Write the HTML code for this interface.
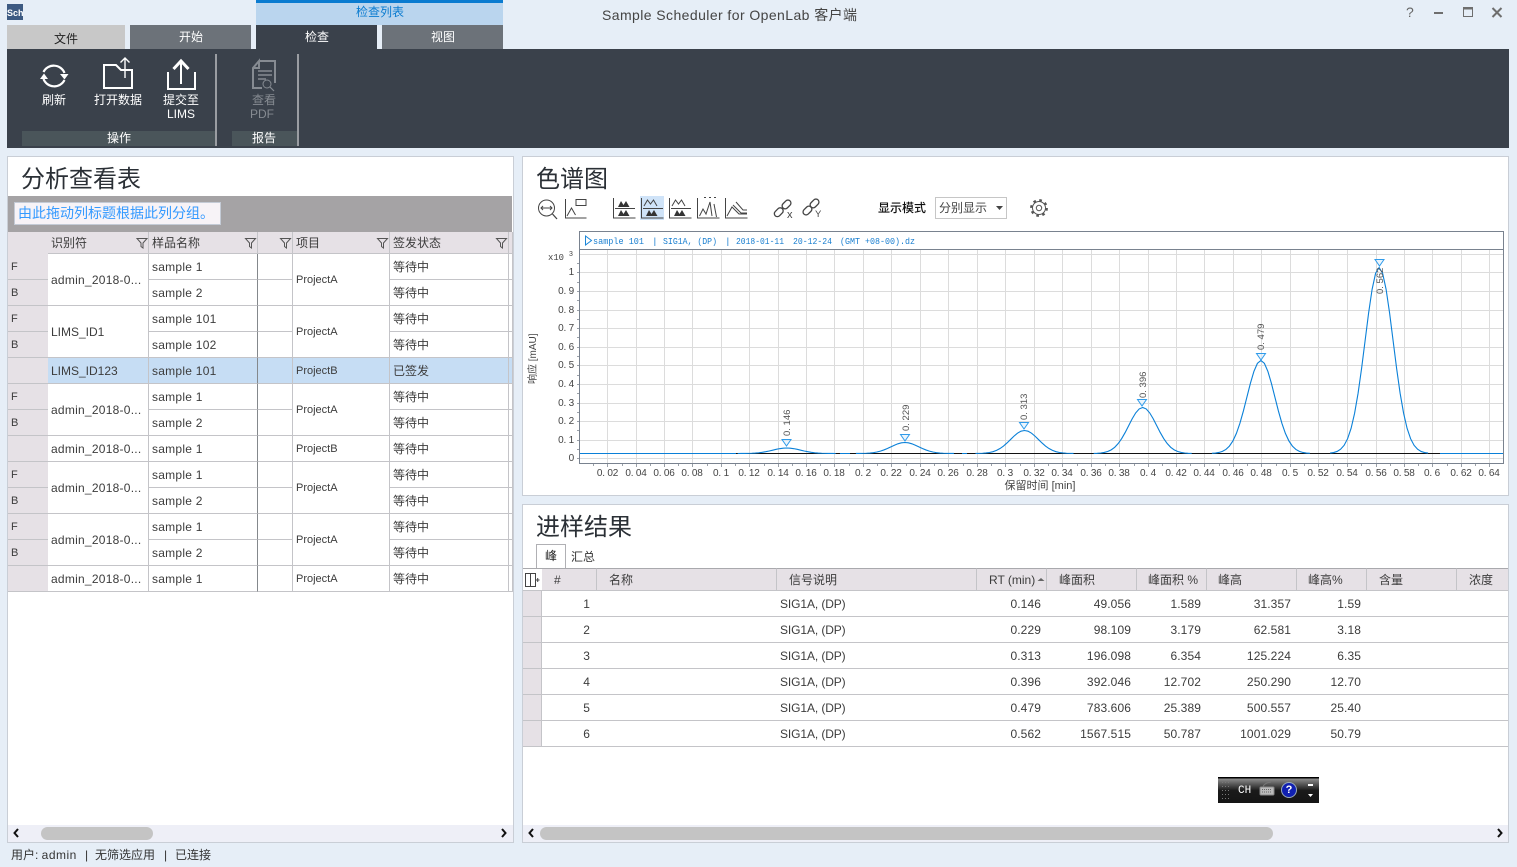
<!DOCTYPE html>
<html lang="zh"><head><meta charset="utf-8"><title>Sample Scheduler for OpenLab</title>
<style>
html,body{margin:0;padding:0}
body{width:1517px;height:867px;position:relative;overflow:hidden;background:#e6eef7;font-family:"Liberation Sans","Noto Sans CJK SC",sans-serif;color:#333;font-size:12px}
.a{position:absolute}
.t{position:absolute;white-space:nowrap;line-height:16px;height:16px}
.c{transform:translateX(-50%)}
.panel{position:absolute;background:#fff;border:1px solid #c9ced6;box-sizing:border-box}
.title{position:absolute;font-size:24px;line-height:30px;white-space:nowrap;color:#2b3036}
table{position:absolute;border-collapse:separate;border-spacing:0;table-layout:fixed}
td,th{box-sizing:border-box;padding:0 3px;font-weight:normal;text-align:left;white-space:nowrap;overflow:hidden;border-right:1px solid #c4c4c8;border-bottom:1px solid #c4c4c8;height:26px;color:#3c3c3c;letter-spacing:.25px}
th{height:22px;background:#e6e1e6;border-bottom:1px solid #c4c4c8;letter-spacing:0}
.h{background:#e6e1e6;font-size:11px;padding-left:3px;border-right:none}
.d{border-right:1px solid #84888c}
.p{font-size:11px;letter-spacing:0}
.z{letter-spacing:0}
.s td{background:#c6ddf4}
.s td.h{background:#e6e1e6}
#R td{text-align:right;padding:0 6px;border-right:none;letter-spacing:.1px}
#R td.l{text-align:left;padding:0 3px;letter-spacing:-.1px}
#R td.h{background:#e6e1e6;border-right:1px solid #c4c4c8}
#R th{padding:0 0 0 12px;border-top:1px solid #a9a9ad;height:23px}
.sb{position:absolute;background:#eeeff7;height:17px}
.th{position:absolute;background:#c4c4c4;border-radius:7px;height:13px}
svg{position:absolute;left:0;top:0}
</style></head>
<body>
<!-- title bar -->
<div class="a" style="left:7px;top:4px;width:16px;height:16px;background:#3d5a82;color:#fff;font:bold 9px/19px 'Liberation Sans',sans-serif;text-align:center;overflow:hidden">Sch</div>
<div class="a" style="left:256px;top:0;width:247px;height:25px;background:#bad5ee;border-top:3px solid #0a7bd0;box-sizing:border-box"></div>
<div class="t c" style="left:380px;top:4px;color:#0a7bd0">检查列表</div>
<div class="t" style="left:602px;top:7px;font-size:14px;letter-spacing:.42px;color:#444">Sample Scheduler for OpenLab 客户端</div>
<div class="a" style="left:7px;top:25px;width:118px;height:24px;background:#c8c8c8"></div>
<div class="a" style="left:130px;top:25px;width:121px;height:24px;background:#6c7279"></div>
<div class="a" style="left:256px;top:25px;width:121px;height:24px;background:#3a414b"></div>
<div class="a" style="left:382px;top:25px;width:121px;height:24px;background:#6c7279"></div>
<div class="t c" style="left:66px;top:31px;color:#222">文件</div>
<div class="t c" style="left:191px;top:29px;color:#fff">开始</div>
<div class="t c" style="left:317px;top:29px;color:#fff">检查</div>
<div class="t c" style="left:443px;top:29px;color:#fff">视图</div>
<!-- ribbon -->
<div class="a" style="left:7px;top:49px;width:1502px;height:99px;background:#3a414b"></div>
<div class="a" style="left:22px;top:131px;width:193px;height:15px;background:#4a555a"></div>
<div class="a" style="left:232px;top:131px;width:65px;height:15px;background:#4a555a"></div>
<div class="a" style="left:215px;top:54px;width:2px;height:92px;background:#9a9da2"></div>
<div class="a" style="left:297px;top:54px;width:2px;height:92px;background:#9a9da2"></div>
<div class="t c" style="left:54px;top:92px;color:#fff">刷新</div>
<div class="t c" style="left:118px;top:92px;color:#fff">打开数据</div>
<div class="t c" style="left:181px;top:92px;color:#fff">提交至</div>
<div class="t c" style="left:181px;top:106px;color:#fff">LIMS</div>
<div class="t c" style="left:264px;top:92px;color:#868b92">查看</div>
<div class="t c" style="left:262px;top:106px;color:#868b92">PDF</div>
<div class="t c" style="left:119px;top:130px;color:#fff">操作</div>
<div class="t c" style="left:264px;top:130px;color:#fff">报告</div>

<!-- left panel -->
<div class="panel" style="left:7px;top:156px;width:507px;height:687px"></div>
<div class="title" style="left:21px;top:165px">分析查看表</div>
<div class="a" style="left:8px;top:196px;width:504px;height:36px;background:#a5a3a5"></div>
<div class="a" style="left:14px;top:202px;width:207px;height:23px;background:#f7f3f7;border:1px solid #c4cbd6;box-sizing:border-box;color:#3399ff;font-size:14px;line-height:21px;padding-left:3px;white-space:nowrap">由此拖动列标题根据此列分组。</div>
<table style="left:8px;top:232px;width:505px">
<colgroup><col style="width:40px"><col style="width:101px"><col style="width:109px"><col style="width:35px"><col style="width:97px"><col style="width:119px"><col style="width:4px"></colgroup>
<tr><th style="border-right:none;border-bottom:none"></th><th>识别符</th><th>样品名称</th><th></th><th>项目</th><th>签发状态</th><th style="padding:0"></th></tr>
<tr><td class="h">F</td><td rowspan="2">admin_2018-0...</td><td class="d">sample 1</td><td></td><td rowspan="2" class="p">ProjectA</td><td class="z">等待中</td><td style="padding:0"></td></tr>
<tr><td class="h">B</td><td class="d">sample 2</td><td></td><td class="z">等待中</td><td style="padding:0"></td></tr>
<tr><td class="h">F</td><td rowspan="2" class="z">LIMS_ID1</td><td class="d">sample 101</td><td></td><td rowspan="2" class="p">ProjectA</td><td class="z">等待中</td><td style="padding:0"></td></tr>
<tr><td class="h">B</td><td class="d">sample 102</td><td></td><td class="z">等待中</td><td style="padding:0"></td></tr>
<tr class="s"><td class="h"></td><td class="z">LIMS_ID123</td><td class="d">sample 101</td><td></td><td class="p">ProjectB</td><td class="z">已签发</td><td style="padding:0"></td></tr>
<tr><td class="h">F</td><td rowspan="2">admin_2018-0...</td><td class="d">sample 1</td><td></td><td rowspan="2" class="p">ProjectA</td><td class="z">等待中</td><td style="padding:0"></td></tr>
<tr><td class="h">B</td><td class="d">sample 2</td><td></td><td class="z">等待中</td><td style="padding:0"></td></tr>
<tr><td class="h"></td><td>admin_2018-0...</td><td class="d">sample 1</td><td></td><td class="p">ProjectB</td><td class="z">等待中</td><td style="padding:0"></td></tr>
<tr><td class="h">F</td><td rowspan="2">admin_2018-0...</td><td class="d">sample 1</td><td></td><td rowspan="2" class="p">ProjectA</td><td class="z">等待中</td><td style="padding:0"></td></tr>
<tr><td class="h">B</td><td class="d">sample 2</td><td></td><td class="z">等待中</td><td style="padding:0"></td></tr>
<tr><td class="h">F</td><td rowspan="2">admin_2018-0...</td><td class="d">sample 1</td><td></td><td rowspan="2" class="p">ProjectA</td><td class="z">等待中</td><td style="padding:0"></td></tr>
<tr><td class="h">B</td><td class="d">sample 2</td><td></td><td class="z">等待中</td><td style="padding:0"></td></tr>
<tr><td class="h"></td><td>admin_2018-0...</td><td class="d">sample 1</td><td></td><td class="p">ProjectA</td><td class="z">等待中</td><td style="padding:0"></td></tr>
</table>
<div class="sb" style="left:8px;top:825px;width:505px"></div>
<div class="th" style="left:41px;top:827px;width:112px"></div>

<!-- chart panel -->
<div class="panel" style="left:522px;top:156px;width:987px;height:340px"></div>
<div class="title" style="left:536px;top:165px">色谱图</div>
<div class="a" style="left:640px;top:196px;width:24px;height:24px;background:#cfe3f8"></div>
<div class="t" style="left:878px;top:200px;color:#111;font-weight:500">显示模式</div>
<div class="a" style="left:935px;top:197px;width:72px;height:22px;box-sizing:border-box;border:1px solid #c6c6c6;padding-left:3px;line-height:20px;white-space:nowrap;color:#444">分别显示</div>

<!-- results panel -->
<div class="panel" style="left:522px;top:504px;width:987px;height:339px"></div>
<div class="title" style="left:536px;top:513px">进样结果</div>
<div class="a" style="left:536px;top:544px;width:30px;height:25px;background:#fff;border:1px solid #b0b0b4;border-bottom:none;box-sizing:border-box;text-align:center;line-height:23px;color:#222">峰</div>
<div class="t" style="left:571px;top:549px;color:#333">汇总</div>
<table id="R" style="left:523px;top:568px;width:985px">
<colgroup><col style="width:19px"><col style="width:55px"><col style="width:180px"><col style="width:200px"><col style="width:70px"><col style="width:90px"><col style="width:70px"><col style="width:90px"><col style="width:70px"><col style="width:90px"><col style="width:51px"></colgroup>
<tr><th style="padding:0;border-right:none;background:#fff"></th><th>#</th><th>名称</th><th>信号说明</th><th>RT (min)</th><th>峰面积</th><th style="padding-left:11px">峰面积 %</th><th style="padding-left:11px">峰高</th><th style="padding-left:11px">峰高%</th><th>含量</th><th style="border-right:none">浓度</th></tr>
<tr><td class="h"></td><td style="padding-right:7px">1</td><td></td><td class="l">SIG1A, (DP)</td><td>0.146</td><td>49.056</td><td>1.589</td><td>31.357</td><td>1.59</td><td></td><td></td></tr>
<tr><td class="h"></td><td style="padding-right:7px">2</td><td></td><td class="l">SIG1A, (DP)</td><td>0.229</td><td>98.109</td><td>3.179</td><td>62.581</td><td>3.18</td><td></td><td></td></tr>
<tr><td class="h"></td><td style="padding-right:7px">3</td><td></td><td class="l">SIG1A, (DP)</td><td>0.313</td><td>196.098</td><td>6.354</td><td>125.224</td><td>6.35</td><td></td><td></td></tr>
<tr><td class="h"></td><td style="padding-right:7px">4</td><td></td><td class="l">SIG1A, (DP)</td><td>0.396</td><td>392.046</td><td>12.702</td><td>250.290</td><td>12.70</td><td></td><td></td></tr>
<tr><td class="h"></td><td style="padding-right:7px">5</td><td></td><td class="l">SIG1A, (DP)</td><td>0.479</td><td>783.606</td><td>25.389</td><td>500.557</td><td>25.40</td><td></td><td></td></tr>
<tr><td class="h"></td><td style="padding-right:7px">6</td><td></td><td class="l">SIG1A, (DP)</td><td>0.562</td><td>1567.515</td><td>50.787</td><td>1001.029</td><td>50.79</td><td></td><td></td></tr>
</table>
<div class="sb" style="left:523px;top:825px;width:985px"></div>
<div class="th" style="left:540px;top:827px;width:733px"></div>

<!-- IME bar -->
<div class="a" style="left:1218px;top:777px;width:101px;height:26px;background:linear-gradient(#000 0,#000 1px,#8a8a8a 2px,#1a1a1a 52%,#151515 100%)"></div>
<div class="a" style="left:1238px;top:785px;font:11px/12px 'Liberation Mono',monospace;color:#fff">CH</div>
<div class="a" style="left:1281px;top:782px;width:14px;height:14px;border-radius:50%;background:#1020b0;border:1px solid #9ab;box-sizing:content-box;color:#fff;font:bold 11px/14px 'Liberation Sans',sans-serif;text-align:center">?</div>

<!-- status -->
<div class="t" style="left:11px;top:847px;color:#333">用户: <span style="letter-spacing:.5px">admin</span></div>
<div class="t" style="left:85px;top:847px">|</div>
<div class="t" style="left:95px;top:847px">无筛选应用</div>
<div class="t" style="left:164px;top:847px">|</div>
<div class="t" style="left:175px;top:847px">已连接</div>

<!-- window controls + vector overlay -->
<div class="t" style="left:1406px;top:4px;color:#666;font-size:14px">?</div>

<svg width="1517" height="867" viewBox="0 0 1517 867" xmlns="http://www.w3.org/2000/svg" font-family="Liberation Sans, Noto Sans CJK SC, sans-serif">
<!-- window -->
<g fill="none" stroke="#6e6e6e">
<path d="M1434 13h9" stroke-width="2"/>
<path d="M1463.500 7.500h9v9h-9z"/><path d="M1463 8.500h10" stroke-width="2"/>
<path d="M1492.500 8l9 9M1501.500 8l-9 9" stroke-width="2"/>
</g>
<!-- refresh -->
<g fill="none" stroke="#fff" stroke-width="2.200">
<path d="M43.500 72A11.500 11.500 0 0 1 64.500 73"/>
<path d="M64.500 80A11.500 11.500 0 0 1 43.500 79"/>
</g>
<path d="M60 74h8.500l-4 5.500z M40 79h8l-4-5.500z" fill="#fff"/>
<!-- open -->
<g fill="none" stroke="#fff">
<path d="M104 88V65H116L121 70H132V88Z" stroke-width="2"/>
<path d="M125 78V58M120.500 62.500L125 58L129.500 62.500" stroke-width="1.400"/>
</g>
<!-- submit -->
<g fill="none" stroke="#fff">
<path d="M168 72V89H195V72" stroke-width="2"/>
<path d="M181 84V62" stroke-width="2"/>
<path d="M173.500 69L181 61L188.500 69" stroke-width="3"/>
</g>
<!-- pdf -->
<g fill="none" stroke="#868b92">
<path d="M259 61H275V83M262 88H253V68L259 61V68H253" stroke-width="2"/>
<path d="M258 71H272M258 75H272M258 79H266" stroke-width="1.500"/>
<circle cx="267" cy="84" r="4" stroke-width="1"/><path d="M270 87L274 91" stroke-width="1.200"/>
</g>
<!-- filters -->
<g fill="none" stroke="#555" stroke-width="1">
<path d="M137 238.500h10l-4 4.500v5l-2-1.500v-3.500z"/>
<path d="M245.500 238.500h10l-4 4.500v5l-2-1.500v-3.500z"/>
<path d="M280.500 238.500h10l-4 4.500v5l-2-1.500v-3.500z"/>
<path d="M377.500 238.500h10l-4 4.500v5l-2-1.500v-3.500z"/>
<path d="M496.500 238.500h10l-4 4.500v5l-2-1.500v-3.500z"/>
</g>
<!-- scroll arrows -->
<g fill="none" stroke="#111" stroke-width="2">
<path d="M18 829l-3.500 4 3.500 4M502 829l3.500 4-3.500 4M533 829l-3.500 4 3.500 4M1498 829l3.500 4-3.500 4"/>
</g>
<!-- table chooser & sort -->
<g fill="none" stroke="#444">
<path d="M525.500 573.500h10v13h-10zM530.500 573.500v13M536 580h3.500M537.700 578v4"/>
</g>
<path d="M1037.500 581h7l-3.500-3z" fill="#666"/>

<!-- toolbar -->
<g fill="none" stroke="#444" stroke-width="1">
<circle cx="546.500" cy="208" r="8"/><path d="M552.500 214L557 219" stroke-width="1.300"/><path d="M541 208h11M543 206l-2 2 2 2M550 206l2 2-2 2"/>
<path d="M565.500 199v19h21M567 216l4.500-8 4 7M576 199.500h10v6h-10z"/>
<path d="M613.500 198v20h22M615 208.500h20"/>
<path d="M641.500 198v20h22M643 208.500h20M644 206l3.500-6 3 4 3-4 3.500 6"/>
<path d="M669.500 198v20h22M671 208.500h20M672 206l3.500-6 3 4 3-4 3.500 6"/>
<path d="M697.500 198v20h22M699.500 216l3.500-7 3 5 4-12 2 14M714 204l2.500 13M704 197.500h2M709 197.500h2M714 197.500h2"/>
<path d="M725.500 198v20h22M727 216l5-9 7 7h8M733 205l8 8h6M736 202l7 8h4"/>
</g>
<g fill="#333">
<path d="M618 207l3-6 2.500 4 2.500-4 3.500 6z M618 216l3-6 2.500 4 2.500-4 3.500 6z"/>
<path d="M646 216l3-6 2.500 4 2.500-4 3.500 6z"/>
<path d="M674 216l3-6 2.500 4 2.500-4 3.500 6z"/>
</g>
<g fill="none" stroke="#444" stroke-width="1.300">
<g transform="rotate(-45 783 208)"><rect x="772" y="205" width="10" height="6" rx="3"/><rect x="783" y="205" width="10" height="6" rx="3"/></g>
<g transform="rotate(-45 811 207)"><rect x="801" y="204" width="10" height="6" rx="3"/><rect x="811" y="204" width="10" height="6" rx="3"/></g>
</g>
<text x="787" y="218" font-size="11" fill="#444">x</text>
<text x="815" y="217" font-size="9.500" fill="#444">Y</text>
<path d="M996 206h7l-3.500 4z" fill="#444"/>
<!-- gear -->
<g fill="none" stroke="#555">
<circle cx="1039" cy="208" r="7.700" stroke-width="2.400" stroke-dasharray="2.600 3.450"/>
<circle cx="1039" cy="208" r="6.500" fill="#fff"/>
<circle cx="1039" cy="208" r="2.700"/>
</g>

<!-- chart -->
<rect x="579.500" y="231.500" width="924" height="232" fill="#fff" stroke="#79828f"/>
<path d="M579.500 249.500H1503.500" stroke="#79828f"/>
<g stroke="#dcdcdc" fill="none">
<path d="M607.500 250v213M636.500 250v213M664.500 250v213M692.500 250v213M721.500 250v213M749.500 250v213M778.500 250v213M806.500 250v213M834.500 250v213M863.500 250v213M891.500 250v213M920.500 250v213M948.500 250v213M977.500 250v213M1005.500 250v213M1034.500 250v213M1062.500 250v213M1091.500 250v213M1119.500 250v213M1148.500 250v213M1176.500 250v213M1204.500 250v213M1233.500 250v213M1261.500 250v213M1290.500 250v213M1318.500 250v213M1347.500 250v213M1376.500 250v213M1404.500 250v213M1432.500 250v213M1461.500 250v213M1489.500 250v213"/>
<path d="M580 254.500H1503M580 272.500H1503M580 291.500H1503M580 310.500H1503M580 328.500H1503M580 347.500H1503M580 365.500H1503M580 384.500H1503M580 403.500H1503M580 421.500H1503M580 440.500H1503M580 458.500H1503"/>
</g>
<g stroke="#9aa0a8" fill="none">
<path d="M593.500 464v2M607.500 464v3M622.500 464v2M636.500 464v3M650.500 464v2M664.500 464v3M678.500 464v2M692.500 464v3M707.500 464v2M721.500 464v3M735.500 464v2M749.500 464v3M764.500 464v2M778.500 464v3M792.500 464v2M806.500 464v3M820.500 464v2M834.500 464v3M849.500 464v2M863.500 464v3M877.500 464v2M891.500 464v3M906.500 464v2M920.500 464v3M934.500 464v2M948.500 464v3M963.500 464v2M977.500 464v3M991.500 464v2M1005.500 464v3M1020.500 464v2M1034.500 464v3M1048.500 464v2M1062.500 464v3M1077.500 464v2M1091.500 464v3M1105.500 464v2M1119.500 464v3M1134.500 464v2M1148.500 464v3M1162.500 464v2M1176.500 464v3M1190.500 464v2M1204.500 464v3M1219.500 464v2M1233.500 464v3M1247.500 464v2M1261.500 464v3M1276.500 464v2M1290.500 464v3M1304.500 464v2M1318.500 464v3M1333.500 464v2M1347.500 464v3M1361.500 464v2M1376.500 464v3M1390.500 464v2M1404.500 464v3M1418.500 464v2M1432.500 464v3M1447.500 464v2M1461.500 464v3M1475.500 464v2M1489.500 464v3"/>
<path d="M577 458.500h2M577 449.500h2M577 440.500h2M577 430.500h2M577 421.500h2M577 412.500h2M577 403.500h2M577 393.500h2M577 384.500h2M577 375.500h2M577 365.500h2M577 356.500h2M577 347.500h2M577 337.500h2M577 328.500h2M577 319.500h2M577 310.500h2M577 300.500h2M577 291.500h2M577 282.500h2M577 272.500h2M577 263.500h2"/>
</g>
<!-- baseline -->
<path d="M580 453.500H1503" stroke="#0a80d8" fill="none"/>
<path d="M736 453.500H840M850 453.500H962M967 453.500H1440" stroke="#111" fill="none"/>
<!-- peaks -->
<defs><path id="g" vector-effect="non-scaling-stroke" fill="none" stroke="#0a80d8" stroke-width="1.100" d="M-49 -.0022L-45.500 -.0051L-42 -.0111L-38.500 -.0228L-35 -.0439L-31.500 -.0796L-28 -.1353L-24.500 -.2163L-21 -.3247L-17.500 -.4578L-14 -.6065L-10.500 -.7548L-7 -.8825L-3.500 -.9692L0 -1L3.500 -.9692L7 -.8825L10.500 -.7548L14 -.6065L17.500 -.4578L21 -.3247L24.500 -.2163L28 -.1353L31.500 -.0796L35 -.0439L38.500 -.0228L42 -.0111L45.500 -.0051L49 -.0022"/></defs>
<use href="#g" transform="translate(786.700 453.500) scale(1 5.500)"/>
<use href="#g" transform="translate(904.900 453.500) scale(1 11)"/>
<use href="#g" transform="translate(1024.500 453.500) scale(1 23)"/>
<use href="#g" transform="translate(1142.700 453.500) scale(1 46)"/>
<use href="#g" transform="translate(1260.900 453.500) scale(1 93)"/>
<use href="#g" transform="translate(1379.100 453.500) scale(1 186)"/>
<!-- markers -->
<g fill="#d8ecfb" fill-opacity=".5" stroke="#2f9bea">
<path d="M782 439.500h9l-4.500 6.500z"/>
<path d="M900.500 434.500h9l-4.500 6.500z"/>
<path d="M1019.500 422.500h9l-4.500 6.500z"/>
<path d="M1137.500 399.500h9l-4.500 6.500z"/>
<path d="M1256.500 353.500h9l-4.500 6.500z"/>
<path d="M1375 259.500h9l-4.500 6.500z"/>
</g>
<!-- peak labels -->
<g font-size="9.500" fill="#555" font-family="Liberation Sans, sans-serif">
<text transform="translate(790 436) rotate(-90)">0. 146</text>
<text transform="translate(909 431) rotate(-90)">0. 229</text>
<text transform="translate(1027 420) rotate(-90)">0. 313</text>
<text transform="translate(1146 398) rotate(-90)">0. 396</text>
<text transform="translate(1264 350) rotate(-90)">0. 479</text>
<text transform="translate(1383 294) rotate(-90)">0. 562</text>
</g>
<!-- chart header -->
<path d="M585.500 236l6 4.500-6 4.500z" fill="none" stroke="#1a86d8"/>
<g font-size="9.500" fill="#1a7fd0" font-family="Liberation Mono, monospace">
<text x="593" y="244" textLength="51" lengthAdjust="spacingAndGlyphs">sample 101</text>
<text x="652" y="244">|</text>
<text x="663" y="244" textLength="54" lengthAdjust="spacingAndGlyphs">SIG1A, (DP)</text>
<text x="725" y="244">|</text>
<text x="736" y="244" textLength="48" lengthAdjust="spacingAndGlyphs">2018-01-11</text>
<text x="793" y="244" textLength="39" lengthAdjust="spacingAndGlyphs">20-12-24</text>
<text x="840" y="244" textLength="75" lengthAdjust="spacingAndGlyphs">(GMT +08-00).dz</text>
</g>
<!-- y labels -->
<g font-size="10" fill="#444" text-anchor="end" letter-spacing="-.2">
<text x="574" y="275">1</text>
<text x="574" y="294">0. 9</text><text x="574" y="313">0. 8</text><text x="574" y="331">0. 7</text><text x="574" y="350">0. 6</text><text x="574" y="368">0. 5</text><text x="574" y="387">0. 4</text><text x="574" y="406">0. 3</text><text x="574" y="424">0. 2</text><text x="574" y="443">0. 1</text><text x="574" y="461">0</text>
</g>
<text x="548" y="260" font-size="9.500" fill="#444" font-family="Liberation Mono, monospace" textLength="16" lengthAdjust="spacingAndGlyphs">x10</text>
<text x="569" y="256" font-size="7" fill="#444">3</text>
<text transform="translate(536 384) rotate(-90)" font-size="10" fill="#444">响应 [mAU]</text>
<!-- x labels -->
<g font-size="10" fill="#444" text-anchor="middle" letter-spacing="-.2">
<text x="607.500" y="476">0. 02</text><text x="636" y="476">0. 04</text><text x="664" y="476">0. 06</text><text x="692" y="476">0. 08</text><text x="721" y="476">0. 1</text><text x="749" y="476">0. 12</text><text x="778" y="476">0. 14</text><text x="806" y="476">0. 16</text><text x="834" y="476">0. 18</text><text x="863" y="476">0. 2</text><text x="891" y="476">0. 22</text><text x="920" y="476">0. 24</text><text x="948" y="476">0. 26</text><text x="977" y="476">0. 28</text><text x="1005" y="476">0. 3</text><text x="1034" y="476">0. 32</text><text x="1062" y="476">0. 34</text><text x="1091" y="476">0. 36</text><text x="1119" y="476">0. 38</text><text x="1148" y="476">0. 4</text><text x="1176" y="476">0. 42</text><text x="1204" y="476">0. 44</text><text x="1233" y="476">0. 46</text><text x="1261" y="476">0. 48</text><text x="1290" y="476">0. 5</text><text x="1318" y="476">0. 52</text><text x="1347" y="476">0. 54</text><text x="1376" y="476">0. 56</text><text x="1404" y="476">0. 58</text><text x="1432" y="476">0. 6</text><text x="1461" y="476">0. 62</text><text x="1489" y="476">0. 64</text>
</g>
<text x="1040" y="489" font-size="11" fill="#444" text-anchor="middle">保留时间 [min]</text>
<!-- IME decorations -->
<g fill="#777">
<path d="M1222 782h1v1h-1zM1225 782h1v1h-1zM1228 782h1v1h-1zM1222 786h1v1h-1zM1225 786h1v1h-1zM1228 786h1v1h-1zM1222 790h1v1h-1zM1225 790h1v1h-1zM1228 790h1v1h-1zM1222 794h1v1h-1zM1225 794h1v1h-1zM1228 794h1v1h-1zM1222 798h1v1h-1zM1225 798h1v1h-1zM1228 798h1v1h-1z"/>
</g>
<rect x="1260" y="787" width="14" height="8" rx="1" fill="#bbb" stroke="#888"/>
<path d="M1262 789.500h10M1262 792h10" stroke="#666" stroke-dasharray="1 1"/>
<path d="M1263 787q1-4 8-5" fill="none" stroke="#777"/>
<path d="M1308 784h5v2h-5z" fill="#fff"/>
<path d="M1308 794h5l-2.500 3z" fill="#fff"/>
</svg>
</body></html>
